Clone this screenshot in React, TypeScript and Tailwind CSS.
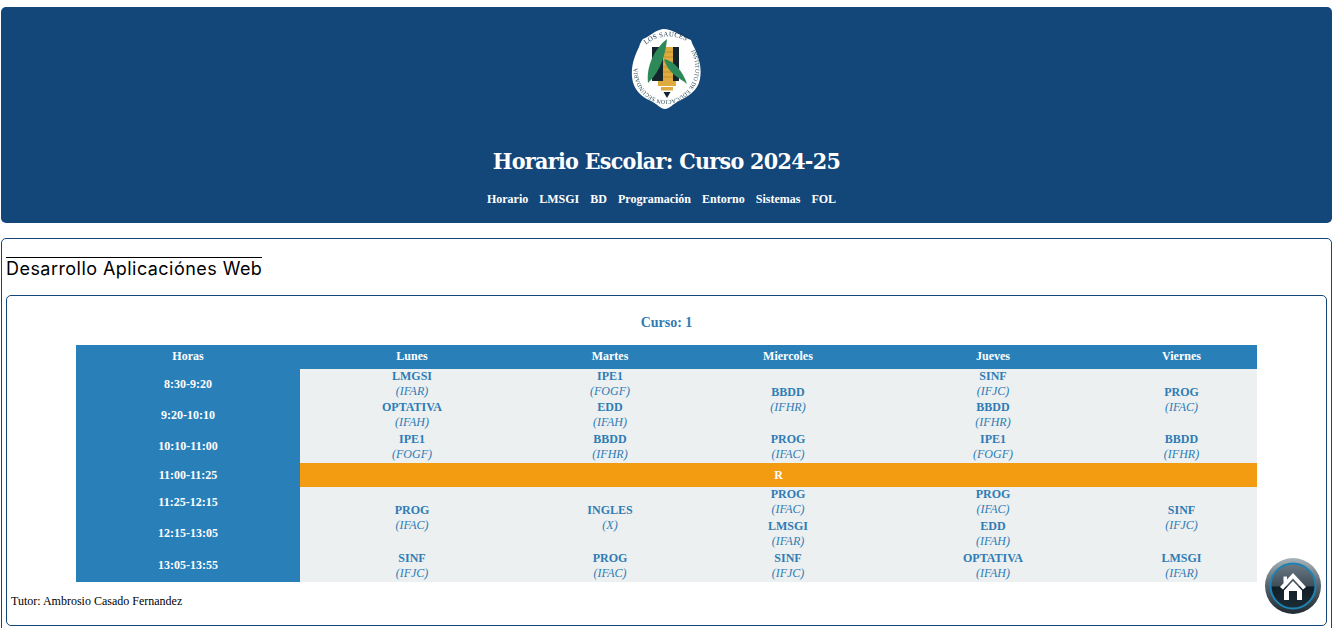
const serif = "font-['Liberation_Serif',serif]";

type Clase = { m: string; p: string; span?: number } | null;

const manana: { hora: string; celdas: Clase[] }[] = [
  {
    hora: "8:30-9:20",
    celdas: [
      { m: "LMGSI", p: "(IFAR)" },
      { m: "IPE1", p: "(FOGF)" },
      { m: "BBDD", p: "(IFHR)", span: 2 },
      { m: "SINF", p: "(IFJC)" },
      { m: "PROG", p: "(IFAC)", span: 2 },
    ],
  },
  {
    hora: "9:20-10:10",
    celdas: [
      { m: "OPTATIVA", p: "(IFAH)" },
      { m: "EDD", p: "(IFAH)" },
      null,
      { m: "BBDD", p: "(IFHR)" },
      null,
    ],
  },
  {
    hora: "10:10-11:00",
    celdas: [
      { m: "IPE1", p: "(FOGF)" },
      { m: "BBDD", p: "(IFHR)" },
      { m: "PROG", p: "(IFAC)" },
      { m: "IPE1", p: "(FOGF)" },
      { m: "BBDD", p: "(IFHR)" },
    ],
  },
];

const tarde: { hora: string; celdas: Clase[] }[] = [
  {
    hora: "11:25-12:15",
    celdas: [
      { m: "PROG", p: "(IFAC)", span: 2 },
      { m: "INGLES", p: "(X)", span: 2 },
      { m: "PROG", p: "(IFAC)" },
      { m: "PROG", p: "(IFAC)" },
      { m: "SINF", p: "(IFJC)", span: 2 },
    ],
  },
  {
    hora: "12:15-13:05",
    celdas: [
      null,
      null,
      { m: "LMSGI", p: "(IFAR)" },
      { m: "EDD", p: "(IFAH)" },
      null,
    ],
  },
  {
    hora: "13:05-13:55",
    celdas: [
      { m: "SINF", p: "(IFJC)" },
      { m: "PROG", p: "(IFAC)" },
      { m: "SINF", p: "(IFJC)" },
      { m: "OPTATIVA", p: "(IFAH)" },
      { m: "LMSGI", p: "(IFAR)" },
    ],
  },
];

const menu = ["Horario", "LMSGI", "BD", "Programación", "Entorno", "Sistemas", "FOL"];
const dias = ["Lunes", "Martes", "Miercoles", "Jueves", "Viernes"];

function Logo() {
  return (
    <svg width="76" height="84" viewBox="0 0 76 84" className="block blur-[0.3px]">
      <path
        d="M34 2 C44 2 54 10 62 13 C63 17 65 20 66 22 C70 32 73 40 71 52 C69 64 58 70 50 74 C44 77 40 82 36 82 C32 82 28 77 22 74 C12 70 4 62 3 50 C2 38 6 28 10 20 C11 16 13 13 14 12 C20 10 26 3 34 2 Z"
        fill="#fff"
      />
      <path id="arcoTop" d="M15 19 Q35 2 60 15" fill="none" />
      <path id="arcoRing" d="M62 24 C70 38 67 58 53 68 C44 75 30 75 21 68 C7 58 5 36 13 24" fill="none" />
      <text fontSize="6.8" fill="#1b3a4a" fontFamily="Liberation Serif, serif" letterSpacing="0.3">
        <textPath href="#arcoTop" startOffset="2">LOS SAUCES</textPath>
      </text>
      <text fontSize="5.8" fill="#27474f" fontFamily="Liberation Serif, serif">
        <textPath href="#arcoRing">INSTITUTO DE EDUCACION SECUNDARIA</textPath>
      </text>
      <rect x="23" y="20" width="27" height="34" fill="#14242c" />
      <rect x="34" y="20" width="10" height="37" fill="#e0ab3e" />
      <path d="M34 25h10M34 30h10M34 35h10M34 40h10M34 45h10M34 50h10" stroke="#a97c26" strokeWidth="0.6" />
      <rect x="29" y="54" width="18" height="5" fill="#e0ab3e" />
      <rect x="32" y="60" width="12" height="3.5" fill="#e0ab3e" />
      <path d="M34.5 65h7l-3.5 6z" fill="#14242c" />
      <path d="M19 56 C17 40 25 22 38 12 C37 25 32 44 19 56 Z" fill="#2d8a58" />
      <path d="M35 32 C45 34 54 44 58 57 C50 50 40 48 35 32 Z" fill="#2d8a58" />
    </svg>
  );
}

function HomeBoton() {
  return (
    <svg width="56" height="56" viewBox="0 0 56 56" className="block">
      <defs>
        <linearGradient id="aro" x1="0" y1="0" x2="0" y2="1">
          <stop offset="0" stopColor="#aab4ba" />
          <stop offset="0.5" stopColor="#55636d" />
          <stop offset="1" stopColor="#1f2a31" />
        </linearGradient>
        <linearGradient id="centro" x1="0" y1="0" x2="0" y2="1">
          <stop offset="0" stopColor="#6b7a84" />
          <stop offset="0.5" stopColor="#3f4e59" />
          <stop offset="0.52" stopColor="#121e26" />
          <stop offset="1" stopColor="#1b2c37" />
        </linearGradient>
      </defs>
      <circle cx="28" cy="28" r="28" fill="url(#aro)" />
      <circle cx="28" cy="28" r="22.5" fill="url(#centro)" stroke="#1c84b4" strokeWidth="2" />
      <path
        d="M28 15 L41 29 L38 31.5 L28 20.5 L18 31.5 L15 29 Z M18.5 18.5 h3.5 v3.5 l-3.5 3.5 Z M28 23 L37 32.5 V42 H32 V33 H24 V42 H19 V32.5 Z"
        fill="#fff"
      />
    </svg>
  );
}

function Filas({ filas, alto }: { filas: { hora: string; celdas: Clase[] }[]; alto: string }) {
  return (
    <>
      {filas.map((f) => (
        <tr key={f.hora} className={alto}>
          <th className="bg-[#2980b9] text-white text-[12px] font-bold p-0 pb-[2px]">{f.hora}</th>
          {f.celdas.map((c, i) =>
            c ? (
              <td key={i} rowSpan={c.span} className="bg-[#ecf0f1] p-0 pb-[1px] text-center align-middle">
                <div className="text-[12px] font-bold leading-[15px] text-[#2f7cb5]">{c.m}</div>
                <div className="text-[12px] italic leading-[15px] text-[#2f7cb5]">{c.p}</div>
              </td>
            ) : null
          )}
        </tr>
      ))}
    </>
  );
}

export default function App() {
  return (
    <div className={`h-screen overflow-hidden bg-white pl-px pr-[4px] pt-[7px] ${serif}`}>
      <header className="h-[216px] rounded-[5px] bg-[#134679] flex flex-col items-center text-white">
        <div className="mt-[20px] h-[82px]">
          <Logo />
        </div>
        <h1 className="mt-[36px] font-['DejaVu_Serif_Condensed','DejaVu_Serif',serif] font-bold text-[23px] tracking-[-0.7px] leading-[32px]">
          Horario Escolar: Curso 2024-25
        </h1>
        <nav className="mt-[14px] mr-[10px] flex gap-[11px] text-[12px] font-bold leading-[16px]">
          {menu.map((m) => (
            <a key={m}>{m}</a>
          ))}
        </nav>
      </header>

      <main className="mt-[15px] rounded-[5px] border border-[#134679] px-[4px] pt-[18px] h-[500px]">
        <h2 className="w-fit border-t border-black font-['Inter',sans-serif] text-[18px] tracking-[0.45px] leading-[22px] text-black">
          Desarrollo Aplicaciónes Web
        </h2>
        <section className="mt-[15px] h-[331px] rounded-[5px] border border-[#134679] px-[4px]">
          <p className="pt-[18px] text-center text-[14px] font-bold leading-[18px] text-[#2f7cb5]">Curso: 1</p>
          <table className="ml-[65px] mt-[13px] w-[1181px] table-fixed border-collapse">
            <colgroup>
              <col className="w-[224px]" />
              <col className="w-[224px]" />
              <col className="w-[172px]" />
              <col className="w-[184px]" />
              <col className="w-[226px]" />
              <col className="w-[151px]" />
            </colgroup>
            <thead>
              <tr className="bg-[#2980b9] text-white text-[12px] font-bold h-[24px]">
                <th className="p-0 pb-[2px]">Horas</th>
                {dias.map((d) => (
                  <th key={d} className="p-0 pb-[2px]">
                    {d}
                  </th>
                ))}
              </tr>
            </thead>
            <tbody>
              <Filas filas={manana} alto="h-[31.33px]" />
              <tr className="h-[24px] text-white text-[12px] font-bold text-center">
                <th className="bg-[#2980b9] p-0">11:00-11:25</th>
                <td colSpan={5} className="bg-[#f39c12] p-0">
                  R
                </td>
              </tr>
              <Filas filas={tarde} alto="h-[31.67px]" />
            </tbody>
          </table>
          <p className="mt-[12px] text-[12px] leading-[15px] text-black">Tutor: Ambrosio Casado Fernandez</p>
        </section>
      </main>

      <a className="fixed left-[1265px] top-[558px]">
        <HomeBoton />
      </a>
    </div>
  );
}
